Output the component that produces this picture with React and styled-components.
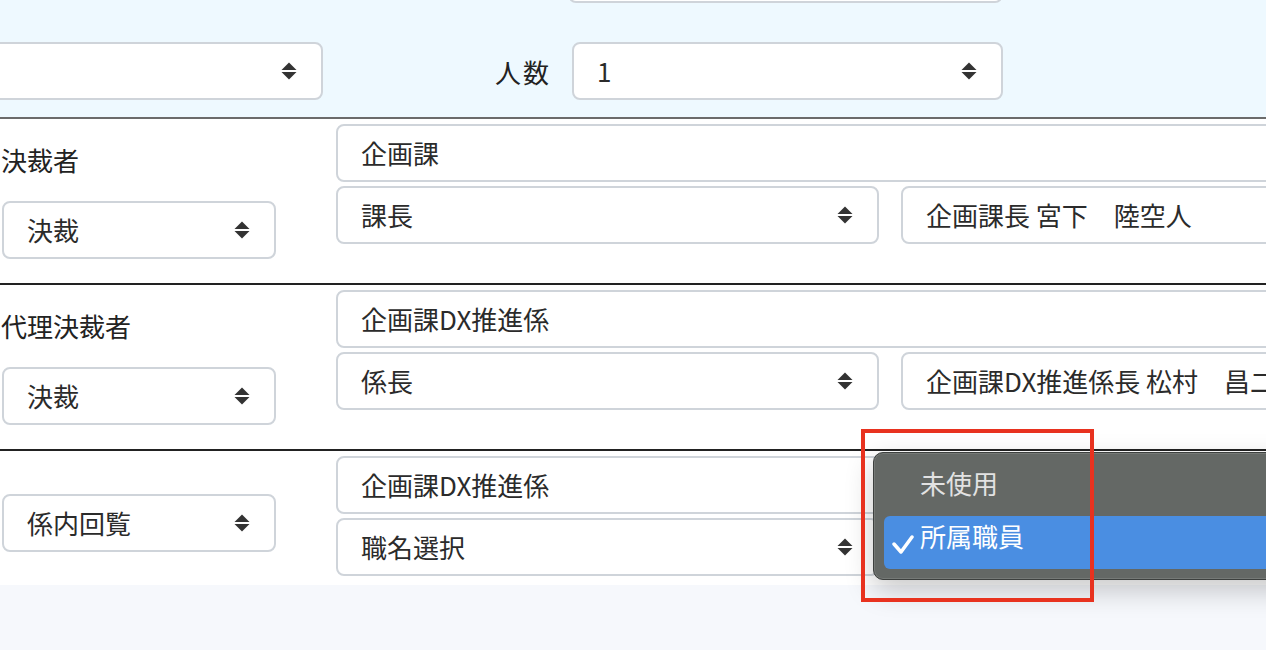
import styled, { createGlobalStyle } from "styled-components";

const GlobalStyle = createGlobalStyle`
  *, *::before, *::after { box-sizing: border-box; }
  html, body {
    margin: 0;
    padding: 0;
    background: #f6f8fc;
    overflow: hidden;
  }
  body {
    font-family: "Noto Sans CJK JP", "Noto Sans", sans-serif;
    color: #2b2b2b;
  }
`;

const Page = styled.div`
  width: 1266px;
  height: 650px;
  overflow: hidden;
  background: #f6f8fc;
`;

const TopSection = styled.div`
  display: grid;
  grid-template-columns: 323px 249px 431px;
  grid-auto-rows: 58px;
  row-gap: 39px;
  align-items: center;
  margin-top: -55px;
  padding-bottom: 17px;
  background: #eef9ff;
  border-bottom: 2px solid #6b6b6b;
`;

const TopLabel = styled.div`
  grid-column: 2;
  text-align: right;
  padding-right: 21px;
  font-size: 26px;
  letter-spacing: 2px;
  color: #222;
`;

const Field = styled.div`
  display: flex;
  align-items: center;
  justify-content: space-between;
  height: 58px;
  padding: 0 24px 0 23px;
  margin-left: ${(p) => p.$bleed || 0}px;
  grid-column: ${(p) => p.$col || "auto"};
  background: #fff;
  border: 2px solid #cfd4da;
  border-radius: 8px;
  font-size: 26px;
  line-height: 1;
  color: #2b2b2b;
  white-space: nowrap;
  overflow: hidden;
`;

const Row = styled.div`
  position: relative;
  display: grid;
  grid-template-columns: 336px 1000px;
  align-items: start;
  background: #fff;
  border-bottom: ${(p) => (p.$last ? "none" : "2px solid #222")};
`;

const LeftCell = styled.div`
  display: flex;
  flex-direction: column;
  align-items: flex-start;
  gap: 22px;
  padding-top: ${(p) => p.$offset}px;
`;

const RowLabel = styled.div`
  font-size: 26px;
  line-height: 39px;
  padding-left: 1px;
  color: #222;
`;

const LeftSelect = styled(Field)`
  width: 274px;
  margin-left: 2px;
`;

const RightCell = styled.div`
  display: grid;
  grid-template-columns: 543px 1fr;
  grid-auto-rows: 58px;
  column-gap: 22px;
  row-gap: 4px;
  padding: 5px 0 ${(p) => p.$bottom}px;
  & > :first-child {
    grid-column: 1 / -1;
  }
`;

const Menu = styled.div`
  position: absolute;
  left: 873px;
  top: 1px;
  width: 480px;
  display: flex;
  flex-direction: column;
  padding: 10px;
  background: #646865;
  border: 1px solid #3d403e;
  border-radius: 10px;
  box-shadow: inset 0 0 0 1px rgba(255, 255, 255, 0.12),
    0 10px 28px rgba(0, 0, 0, 0.22);
`;

const MenuItem = styled.div`
  position: relative;
  display: flex;
  align-items: center;
  height: 53px;
  padding: 0 0 14px 36px;
  border-radius: 6px;
  background: ${(p) => (p.$selected ? "#4a8ee2" : "transparent")};
  color: ${(p) => (p.$selected ? "#fff" : "#e2e2e2")};
  font-size: 26px;
`;

const Check = styled.svg`
  position: absolute;
  left: 8px;
  top: 19px;
`;

const Annotation = styled.div`
  position: absolute;
  left: 861px;
  top: -22px;
  width: 233px;
  height: 173px;
  border: 4px solid #e8321f;
  pointer-events: none;
`;

function Arrows() {
  return (
    <svg width="16" height="18" viewBox="0 0 16 18">
      <polygon points="0.5,8 8,0.5 15.5,8" fill="#333" />
      <polygon points="0.5,10 15.5,10 8,17.5" fill="#333" />
    </svg>
  );
}

function Select({ children, ...rest }) {
  return (
    <Field {...rest}>
      <span>{children}</span>
      <Arrows />
    </Field>
  );
}

function LeftSelectBox({ children }) {
  return (
    <LeftSelect>
      <span>{children}</span>
      <Arrows />
    </LeftSelect>
  );
}

export default function App() {
  return (
    <Page>
      <GlobalStyle />
      <TopSection>
        <Field $col={3} $bleed={-4} />
        <Select $bleed={-40} />
        <TopLabel>人数</TopLabel>
        <Select>1</Select>
      </TopSection>

      <Row>
        <LeftCell $offset={21}>
          <RowLabel>決裁者</RowLabel>
          <LeftSelectBox>決裁</LeftSelectBox>
        </LeftCell>
        <RightCell $bottom={39}>
          <Field>企画課</Field>
          <Select>課長</Select>
          <Field>企画課長 宮下　陸空人</Field>
        </RightCell>
      </Row>

      <Row>
        <LeftCell $offset={21}>
          <RowLabel>代理決裁者</RowLabel>
          <LeftSelectBox>決裁</LeftSelectBox>
        </LeftCell>
        <RightCell $bottom={39}>
          <Field>企画課DX推進係</Field>
          <Select>係長</Select>
          <Field>企画課DX推進係長 松村　昌二</Field>
        </RightCell>
      </Row>

      <Row $last>
        <LeftCell $offset={43}>
          <LeftSelectBox>係内回覧</LeftSelectBox>
        </LeftCell>
        <RightCell $bottom={9}>
          <Field>企画課DX推進係</Field>
          <Select>職名選択</Select>
        </RightCell>

        <Menu>
          <MenuItem>未使用</MenuItem>
          <MenuItem $selected>
            <Check width="22" height="20" viewBox="0 0 22 20">
              <polyline
                points="2,9 9,17 20,2"
                fill="none"
                stroke="#fff"
                strokeWidth="3.5"
                strokeLinecap="round"
                strokeLinejoin="round"
              />
            </Check>
            所属職員
          </MenuItem>
        </Menu>
        <Annotation />
      </Row>
    </Page>
  );
}
